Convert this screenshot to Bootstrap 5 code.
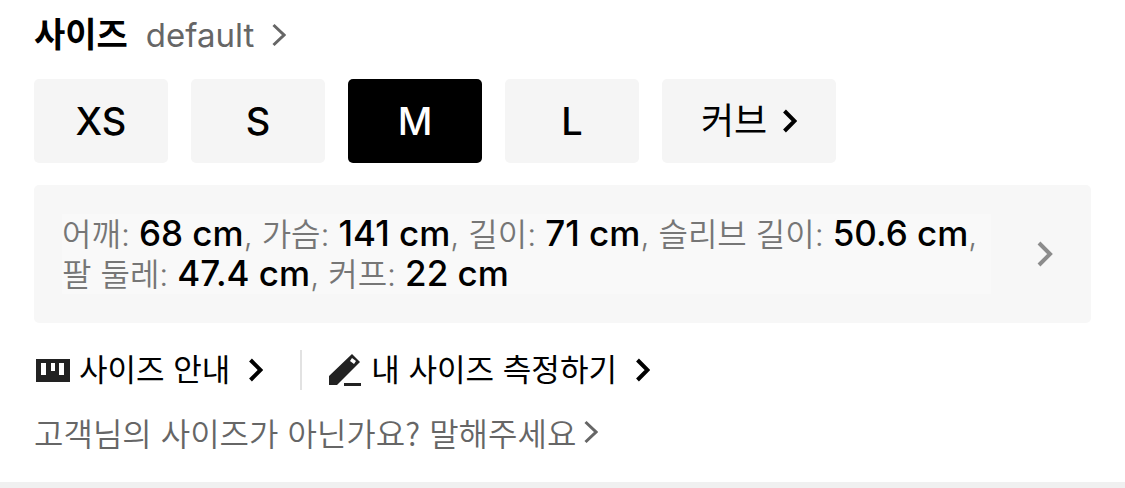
<!DOCTYPE html>
<html lang="ko">
<head>
<meta charset="utf-8">
<meta name="viewport" content="width=device-width, initial-scale=1">
<title>사이즈</title>
<link rel="stylesheet" href="https://cdn.jsdelivr.net/npm/bootstrap@5.3.0/dist/css/bootstrap.min.css">
<script defer src="https://cdn.jsdelivr.net/npm/bootstrap@5.3.0/dist/js/bootstrap.bundle.min.js"></script>
<style>
body{font-family:Inter,"Noto Sans CJK KR",sans-serif;color:#000;background:#fff;font-size:32px;line-height:40px}
a,a:hover{color:inherit;text-decoration:none}
svg{flex:none}
.chev{width:14px;height:24px;fill:none;stroke:currentColor;stroke-width:3}
.chev-bold{stroke-width:4}
.size-page{padding:15px 34px 30px}
.size-title{font-size:34px;font-weight:700;line-height:40px}
.size-value{font-size:33px;margin:0 18px}
.hangul{font-family:"Noto Sans CJK KR",sans-serif}
.muted,.muted:hover{color:#666}
.sizes{gap:23px;margin-top:24px}
.size-btn{--bs-btn-border-width:0px;--bs-btn-bg:#f5f5f5;--bs-btn-color:#000;--bs-btn-hover-bg:#eee;--bs-btn-active-bg:#000;--bs-btn-active-color:#fff;--bs-btn-border-radius:5px;--bs-btn-padding-x:0;--bs-btn-padding-y:0;width:134px;height:84px;font-size:38px;font-weight:500;line-height:40px}
.size-btn.wide{width:174px;font-size:36px;font-weight:400}
.measure,.measure:hover{background:#f7f7f7;border-radius:5px;padding:29px 38px 29px 28px;line-height:39px;color:#767676;margin-top:22px}
.measure-text{background:#f9f9f9;margin-right:46px;font-weight:350}
.measure b{font-size:35px;font-weight:500;color:#000}
.measure .chev{stroke:#8c8c8c;width:16px;height:28px}
.tools{margin-top:27px;font-size:31px}
.tools a{gap:9px}
.tools .chev{margin-left:10px}
.rule{width:2px;height:40px;background:#e2e2e2;margin:0 27px 0 37px}
.feedback{margin-top:22px;gap:8px;font-weight:350}
.foot{height:6px;background:#f0f0f0}
</style>
</head>
<body>
<main class="size-page">
  <a href="#" class="d-flex align-items-center">
    <h1 class="size-title mb-0">사이즈</h1>
    <span class="size-value muted">default</span>
    <svg class="chev muted" viewBox="0 0 14 24"><path d="M1.5 2 12 12 1.5 22"/></svg>
  </a>
  <div class="sizes d-flex flex-wrap">
    <button type="button" class="btn size-btn">XS</button>
    <button type="button" class="btn size-btn">S</button>
    <button type="button" class="btn size-btn active" aria-pressed="true">M</button>
    <button type="button" class="btn size-btn">L</button>
    <button type="button" class="btn size-btn wide d-flex align-items-center justify-content-center gap-3">커브
      <svg class="chev chev-bold" viewBox="0 0 14 24"><path d="M1.5 2 11.5 12 1.5 22"/></svg>
    </button>
  </div>
  <a href="#" class="measure d-flex align-items-center">
    <span class="measure-text flex-fill">어깨: <b>68 cm</b>, 가슴: <b>141 cm</b>, 길이: <b>71 cm</b>, 슬리브 길이: <b>50.6 cm</b>, 팔 둘레: <b>47.4 cm</b>, 커프: <b>22 cm</b></span>
    <svg class="chev chev-bold" viewBox="0 0 16 28"><path d="M2 3 13 14 2 25"/></svg>
  </a>
  <div class="tools d-flex flex-wrap align-items-center">
    <a href="#" class="d-flex align-items-center">
      <svg width="36" height="24" viewBox="0 0 36 24"><path fill="#222" fill-rule="evenodd" d="M2 1h34v23H2zM7 5v12h5V5zM17 5v8h4V5zM25 5v12h5V5z"/></svg>
      사이즈 안내
      <svg class="chev chev-bold" viewBox="0 0 14 24"><path d="M1.5 2 11.5 12 1.5 22"/></svg>
    </a>
    <span class="rule"></span>
    <a href="#" class="d-flex align-items-center">
      <svg width="33" height="34" viewBox="0 0 33 34"><path fill="#222" fill-rule="evenodd" d="M0 32V23L23 1 31 9 8 32ZM23 5 21 8 25 11 27 8Z"/><path fill="#222" d="M15 30h17v3H15z"/></svg>
      내 사이즈 측정하기
      <svg class="chev chev-bold" viewBox="0 0 14 24"><path d="M1.5 2 11.5 12 1.5 22"/></svg>
    </a>
  </div>
  <a href="#" class="feedback hangul muted d-flex align-items-center">고객님의 사이즈가 아닌가요? 말해주세요
    <svg class="chev" viewBox="0 0 14 24"><path d="M1.5 2 12 12 1.5 22"/></svg>
  </a>
</main>
<div class="foot"></div>
</body>
</html>
